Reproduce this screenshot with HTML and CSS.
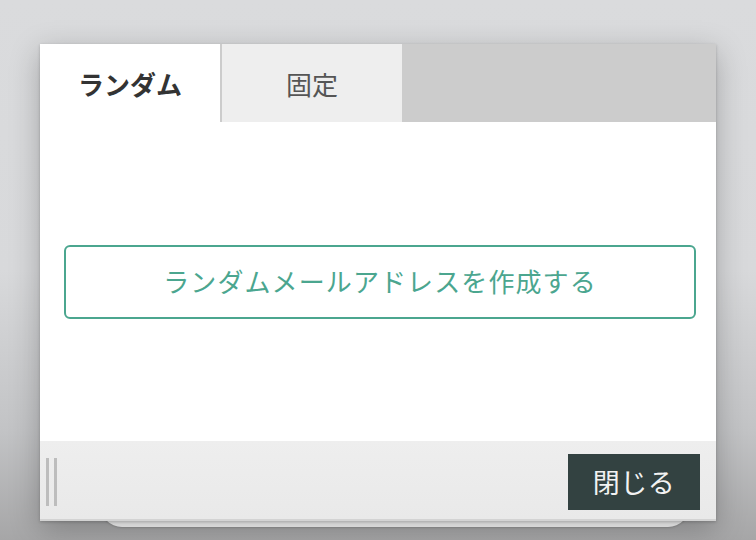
FILE: index.html
```html
<!DOCTYPE html>
<html lang="ja">
<head>
<meta charset="utf-8">
<link rel="stylesheet" href="styles.css">
</head>
<body>
<div class="stage">
  <div class="backcard"></div>
  <div class="panel">
    <div class="tabs">
      <div class="tab tab-active">ランダム</div>
      <div class="tab tab-idle">固定</div>
      <div class="tab-rest"></div>
    </div>
    <div class="content">
      <button class="create">ランダムメールアドレスを作成する</button>
    </div>
    <div class="footer">
      <div class="grip"><span></span><span></span></div>
      <button class="close">閉じる</button>
    </div>
  </div>
</div>
</body>
</html>
```

FILE: styles.css
```css
html, body {
  margin: 0;
  padding: 0;
}
body {
  width: 756px;
  height: 540px;
  overflow: hidden;
  font-family: "Noto Sans CJK JP", "Noto Sans", sans-serif;
  background: linear-gradient(to bottom, #dadbdd 0%, #d8d9db 50%, #c2c3c5 80%, #a6a6a7 100%);
}
.stage {
  position: relative;
  padding: 44px 0 0 40px;
}
.backcard {
  position: absolute;
  left: 100px;
  top: 300px;
  width: 590px;
  height: 227px;
  background: #fafafa;
  border-radius: 0 0 22px 22px;
  box-shadow: 0 1px 2px rgba(0,0,0,0.15);
}
.panel {
  position: relative;
  width: 676px;
  height: 477px;
  display: flex;
  flex-direction: column;
  background: #fff;
  box-shadow: 0 8px 28px rgba(0,0,0,0.25), 0 1px 3px rgba(0,0,0,0.2);
}
.tabs {
  display: flex;
  height: 78px;
  flex: none;
}
.tab {
  width: 180px;
  display: flex;
  align-items: center;
  justify-content: center;
  font-size: 26px;
}
.tab-active {
  background: #fff;
  color: #333;
  font-weight: bold;
  border-right: 2px solid #cccccc;
}
.tab-idle {
  background: #eeeeee;
  color: #555;
}
.tab-rest {
  flex: 1;
  background: #cccccc;
}
.content {
  flex: 1;
  display: flex;
  align-items: center;
  padding: 0 20px 0 24px;
  background: #fff;
}
.create {
  width: 632px;
  height: 74px;
  border: 2px solid #4ba68f;
  border-radius: 6px;
  background: #fff;
  color: #4ba68f;
  font-family: inherit;
  font-size: 26px;
  letter-spacing: 1.1px;
  padding: 0 0 2px 0;
}
.footer {
  height: 80px;
  flex: none;
  box-sizing: border-box;
  display: flex;
  align-items: flex-start;
  justify-content: space-between;
  padding: 13px 16px 0 6px;
  background: linear-gradient(to bottom, #eeeeee, #e9e9e9);
  border-bottom: 2px solid #d3d3d3;
}
.grip {
  display: flex;
  gap: 5px;
  margin-top: 4px;
}
.grip span {
  display: block;
  width: 3px;
  height: 48px;
  background: #bdbdbd;
}
.close {
  width: 132px;
  height: 56px;
  border: none;
  background: #334241;
  color: #f2f2f2;
  font-family: inherit;
  font-size: 27px;
  letter-spacing: 0.5px;
  padding: 0 0 2px 0;
}
```
